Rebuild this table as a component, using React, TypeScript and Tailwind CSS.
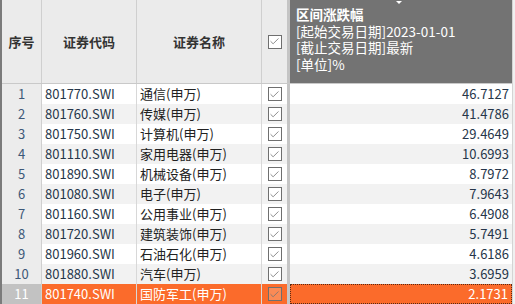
import { Check } from "lucide-react";

type Row = {
  code: string;
  name: string;
  change: string;
};

const rows: Row[] = [
  { code: "801770.SWI", name: "通信(申万)", change: "46.7127" },
  { code: "801760.SWI", name: "传媒(申万)", change: "41.4786" },
  { code: "801750.SWI", name: "计算机(申万)", change: "29.4649" },
  { code: "801110.SWI", name: "家用电器(申万)", change: "10.6993" },
  { code: "801890.SWI", name: "机械设备(申万)", change: "8.7972" },
  { code: "801080.SWI", name: "电子(申万)", change: "7.9643" },
  { code: "801160.SWI", name: "公用事业(申万)", change: "6.4908" },
  { code: "801720.SWI", name: "建筑装饰(申万)", change: "5.7491" },
  { code: "801960.SWI", name: "石油石化(申万)", change: "4.6186" },
  { code: "801880.SWI", name: "汽车(申万)", change: "3.6959" },
  { code: "801740.SWI", name: "国防军工(申万)", change: "2.1731" },
];

const CheckBox = ({ active }: { active?: boolean }) => (
  <div
    className={`flex h-[14px] w-[14px] items-center justify-center border border-[#6f6f6f] ${
      active ? "bg-[#fb8a55]" : "bg-white"
    }`}
  >
    <Check size={11} strokeWidth={1.8} className="text-[#757575]" />
  </div>
);

const App = () => {
  const selected = rows.length - 1;

  return (
    <div
      className="h-[304px] w-[515px] overflow-hidden bg-[#f0f0f0] text-[13px] text-[#26364a]"
      style={{ fontFamily: '"Noto Sans CJK SC", "Noto Sans", sans-serif' }}
    >
      <div className="flex h-full border-l-2 border-[#7b7b7b]">
        <div className="flex w-[510px] flex-col">
          {/* header */}
          <div className="flex h-[84px] shrink-0 border-b border-[#c9c9c9] bg-[#ebebeb] font-bold text-[#333]">
            <div className="flex w-[40px] items-center justify-center border-r border-[#cfcfcf]">
              序号
            </div>
            <div className="flex w-[95px] items-center justify-center border-r border-[#cfcfcf]">
              证券代码
            </div>
            <div className="flex w-[125px] items-center justify-center border-r border-[#cfcfcf]">
              证券名称
            </div>
            <div className="flex w-[28px] items-center justify-center border-r-[3px] border-[#c4c4c4]">
              <CheckBox />
            </div>
            <div className="relative flex-1 bg-[#737373] pl-[6px] pt-[6px] text-[13.5px] font-normal leading-[16.5px] text-white">
              <div className="absolute left-[106px] top-[1px] h-0 w-0 border-x-[3px] border-t-[3px] border-x-transparent border-t-white" />
              <div className="font-bold">区间涨跌幅</div>
              <div>[起始交易日期]2023-01-01</div>
              <div>[截止交易日期]最新</div>
              <div>[单位]%</div>
            </div>
          </div>

          {/* body */}
          {rows.map((row, i) => {
            const active = i === selected;
            const stripe = i % 2 === 1 ? "bg-[#f2f2f2]" : "bg-white";
            const cell = active ? "bg-[#fb6b2b] text-white" : stripe;
            return (
              <div key={row.code} className="flex h-[20px] shrink-0 leading-[20px]">
                <div
                  className={`w-[40px] border-r border-[#cfcfcf] text-center ${
                    active ? "bg-[#c2c2c2] text-white" : "bg-[#ececec] text-[#3c5878]"
                  }`}
                >
                  {i + 1}
                </div>
                <div className={`w-[95px] border-r border-[#d8d8d8] pl-[3px] ${cell}`}>
                  {row.code}
                </div>
                <div
                  className={`w-[125px] border-r border-[#d8d8d8] pl-[3px] ${
                    active ? "" : "text-[#222]"
                  } ${cell}`}
                >
                  {row.name}
                </div>
                <div
                  className={`flex w-[28px] items-center justify-center border-r-[3px] border-[#c4c4c4] ${cell}`}
                >
                  <CheckBox active={active} />
                </div>
                <div
                  className={`flex-1 pr-[3px] text-right ${cell} ${
                    active ? "border border-dotted border-[#5a2a12] leading-[18px]" : ""
                  }`}
                >
                  {row.change}
                </div>
              </div>
            );
          })}
        </div>
        <div className="w-[3px] border-l border-[#d4d4d4] bg-[#f0f0f0]" />
      </div>
    </div>
  );
};

export default App;
